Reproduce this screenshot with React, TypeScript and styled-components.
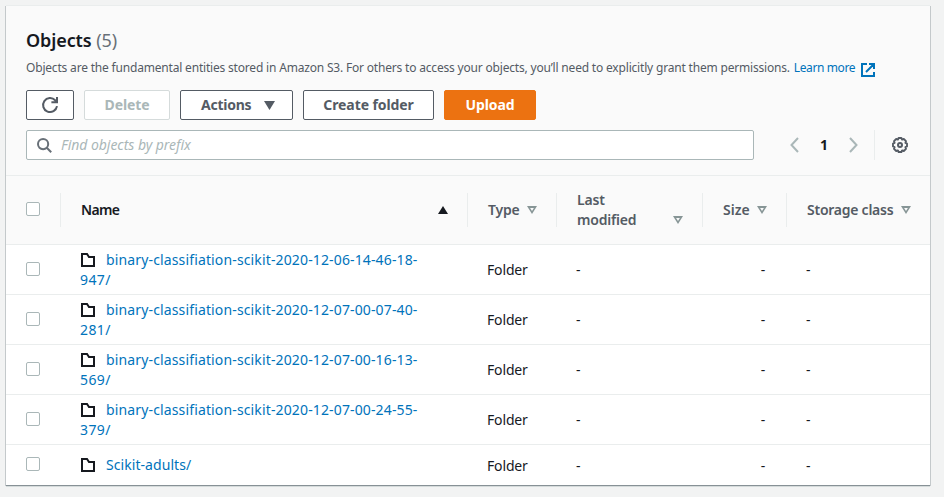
import React from "react";
import styled, { createGlobalStyle } from "styled-components";

const GlobalStyle = createGlobalStyle`
  * { box-sizing: border-box; }
  body {
    margin: 0;
    background: #f2f3f3;
    color: #16191f;
    font-family: "Noto Sans", "Open Sans", sans-serif;
    font-size: 14px;
    line-height: 20px;
  }
`;

const Page = styled.main`
  width: 944px;
  height: 497px;
  padding: 6px 14px 11px 6px;
  overflow: hidden;
`;

const Panel = styled.section`
  width: 924px;
  height: 480px;
  background: #fff;
  box-shadow: 0 1px 0 0 #d5dbdb, 1px 0 0 0 #c4c9cb, -1px 0 0 0 #c4c9cb, 0 -1px 0 0 #eaeded;
  border-bottom: 1px solid #879196;
`;

const PanelHeader = styled.header`
  height: 170px;
  padding: 22px 20px 0;
  background: #fafafa;
  border-bottom: 1px solid #eaeded;
`;

const Text = styled.span<{ $spacing?: number }>`
  letter-spacing: ${({ $spacing = 0 }) => $spacing}px;
  white-space: nowrap;
`;

const Title = styled.h2`
  margin: 0;
  height: 24px;
  font-size: 18px;
  line-height: 24px;
  font-weight: 600;
  letter-spacing: -0.1px;
  white-space: nowrap;
`;

const Count = styled.span`
  color: #687078;
  font-weight: 400;
`;

const Description = styled.p`
  display: flex;
  align-items: center;
  height: 18px;
  margin: 7px 0 13px;
  font-size: 12px;
  line-height: 18px;
  color: #545b64;
`;

const Link = styled.a`
  color: #0073bb;
  text-decoration: none;
`;

const LearnMore = styled(Link)`
  display: flex;
  align-items: center;
  gap: 6px;
  margin-left: 4px;
  svg { margin-top: 3px; }
`;

const Buttons = styled.div`
  display: flex;
  gap: 10px;
`;

const Button = styled.button<{ $width: number; $kind?: "disabled" | "primary" }>`
  display: flex;
  align-items: center;
  justify-content: center;
  gap: 12px;
  width: ${({ $width }) => $width}px;
  height: 30px;
  padding: 0;
  border: 1px solid ${({ $kind }) =>
    $kind === "primary" ? "#ec7211" : $kind === "disabled" ? "#d5dbdb" : "#545b64"};
  border-radius: 2px;
  background: ${({ $kind }) => ($kind === "primary" ? "#ec7211" : "#fff")};
  color: ${({ $kind }) =>
    $kind === "primary" ? "#fff" : $kind === "disabled" ? "#aab7b8" : "#545b64"};
  font: 700 14px/20px "Noto Sans", "Open Sans", sans-serif;
  letter-spacing: -0.1px;
`;

const MenuButton = styled(Button)`
  justify-content: space-between;
  padding: 0 17px 0 20px;
  letter-spacing: -0.25px;
`;

const Tools = styled.div`
  display: flex;
  align-items: center;
  height: 30px;
  margin-top: 10px;
`;

const Search = styled.div`
  display: flex;
  align-items: center;
  gap: 9px;
  width: 728px;
  height: 30px;
  padding-left: 10px;
  border: 1px solid #aab7b8;
  border-radius: 2px;
  background: #fff;
  color: #aab7b8;
  font-style: italic;
`;

const Pager = styled.nav`
  display: flex;
  align-items: center;
  justify-content: space-between;
  width: 68px;
  margin: 0 1px 0 36px;
  font-weight: 700;
`;

const Preferences = styled.div`
  display: flex;
  align-items: center;
  height: 30px;
  margin-left: 15px;
  padding-left: 17px;
  border-left: 1px solid #eaeded;
`;

const Row = styled.div<{ $height: number }>`
  display: grid;
  grid-template-columns: 55px 407px 89px 146px 84px 143px;
  align-items: center;
  height: ${({ $height }) => $height}px;
  border-bottom: 1px solid #eaeded;
  &:last-child { border-bottom: 0; }
`;

const HeadRow = styled(Row)`
  background: #fafafa;
  color: #545b64;
  font-weight: 600;
`;

const HeadCell = styled.div<{ $active?: boolean }>`
  display: flex;
  align-items: center;
  justify-content: space-between;
  height: 34px;
  padding: 0 19px 0 20px;
  border-right: 1px solid #eaeded;
  color: ${({ $active }) => ($active ? "#16191f" : "inherit")};
  &:last-child { border-right: 0; }
`;

const TwoLines = styled.span`
  letter-spacing: -0.2px;
  line-height: 20px;
`;

const LowArrow = styled.span`
  display: flex;
  margin-top: 20px;
`;

const CheckCell = styled.div<{ $divider?: boolean }>`
  display: flex;
  align-items: center;
  height: 34px;
  padding: 0 0 2px 20px;
  border-right: 1px solid ${({ $divider }) => ($divider ? "#eaeded" : "transparent")};
`;

const Checkbox = styled.span`
  width: 14px;
  height: 14px;
  border: 1px solid #aab7b8;
  border-radius: 2px;
  background: #fff;
`;

const NameCell = styled.div`
  padding-left: 19px;
  svg { margin: 0 11px 0 1px; vertical-align: -2px; }
`;

const Cell = styled.div<{ $right?: boolean }>`
  padding: 1px ${({ $right }) => ($right ? 22 : 20)}px 0 19px;
  letter-spacing: -0.15px;
  text-align: ${({ $right }) => ($right ? "right" : "left")};
`;

const ICON = { fill: "none", stroke: "currentColor", strokeWidth: 2 } as const;

const Refresh = () => (
  <svg width="18" height="18" viewBox="0 0 18 18" {...ICON}>
    <path d="M16 10.2A7 7 0 1 1 14.2 4.3L16 6M16 1V6.2H10.4" />
  </svg>
);

const Magnifier = () => (
  <svg width="15" height="15" viewBox="0 0 15 15" {...ICON} stroke="#687078">
    <circle cx="6.1" cy="6.1" r="5.1" />
    <path d="M9.8 9.8l4.4 4.4" />
  </svg>
);

const External = () => (
  <svg width="14" height="14" viewBox="0 0 14 14" {...ICON}>
    <path d="M6 1H1V13H13V9M8 1H13V6M13 1L5 9" />
  </svg>
);

const Chevron = ({ d }: { d: string }) => (
  <svg width="9" height="16" viewBox="0 0 9 16" {...ICON} stroke="#aab7b8">
    <path d={d} />
  </svg>
);

const Gear = () => (
  <svg width="16" height="16" viewBox="0 0 16 16" {...ICON} stroke="#545b64">
    <path
      d="M6.6 1h2.8l.7 1.6 1.7-.6 2.2 2.2-.6 1.7 1.6.7v2.8l-1.6.7.6 1.7-2.2 2.2-1.7-.6-.7 1.6H6.6l-.7-1.6-1.7.6L2 11.8l.6-1.7L1 9.4V6.6l1.6-.7L2 4.2 4.2 2l1.7.6z"
      strokeWidth="1.9"
      strokeLinejoin="round"
    />
    <circle cx="8" cy="8" r="2" />
  </svg>
);

const SortUp = () => (
  <svg width="10" height="8" viewBox="0 0 10 8"><path d="M5 0L10 8H0z" fill="#16191f" /></svg>
);

const SortDown = () => (
  <svg width="10" height="8" viewBox="0 0 10 8">
    <path d="M0 0H10L5 8zM3.1 2H6.9L5 5z" fill="#879596" fillRule="evenodd" />
  </svg>
);

const Caret = () => (
  <svg width="11" height="9" viewBox="0 0 11 9"><path d="M0 0H11L5.5 9z" fill="currentColor" /></svg>
);

const Folder = () => (
  <svg width="14" height="14" viewBox="0 0 14 14" {...ICON}>
    <path d="M1 1H6L8 4H13V13H1z" />
  </svg>
);

const OBJECTS = [
  ["binary-classifiation-scikit-2020-12-06-14-46-18-", "947/"],
  ["binary-classifiation-scikit-2020-12-07-00-07-40-", "281/"],
  ["binary-classifiation-scikit-2020-12-07-00-16-13-", "569/"],
  ["binary-classifiation-scikit-2020-12-07-00-24-55-", "379/"],
  ["Scikit-adults/"],
];

export default function App() {
  return (
    <Page>
      <GlobalStyle />
      <Panel>
        <PanelHeader>
          <Title>Objects <Count>(5)</Count></Title>
          <Description>
            <Text $spacing={-0.187}>
              Objects are the fundamental entities stored in Amazon S3. For others to access your
              objects, you’ll need to explicitly grant them permissions.
            </Text>
            <LearnMore><Text $spacing={-0.4}>Learn more</Text><External /></LearnMore>
          </Description>
          <Buttons>
            <Button $width={48} aria-label="Refresh"><Refresh /></Button>
            <Button $width={86} $kind="disabled">Delete</Button>
            <MenuButton $width={113}>Actions <Caret /></MenuButton>
            <Button $width={131}>Create folder</Button>
            <Button $width={92} $kind="primary">Upload</Button>
          </Buttons>
          <Tools>
            <Search><Magnifier /><Text $spacing={-0.04}>Find objects by prefix</Text></Search>
            <Pager>
              <Chevron d="M8 1L1.5 8L8 15" />
              <span>1</span>
              <Chevron d="M1 1L7.5 8L1 15" />
            </Pager>
            <Preferences><Gear /></Preferences>
          </Tools>
        </PanelHeader>
        <HeadRow $height={69}>
          <CheckCell $divider><Checkbox /></CheckCell>
          <HeadCell $active><Text $spacing={-0.7}>Name</Text><SortUp /></HeadCell>
          <HeadCell><Text $spacing={-0.2}>Type</Text><SortDown /></HeadCell>
          <HeadCell>
            <TwoLines>Last<br />modified</TwoLines>
            <LowArrow><SortDown /></LowArrow>
          </HeadCell>
          <HeadCell><Text $spacing={0}>Size</Text><SortDown /></HeadCell>
          <HeadCell><Text $spacing={-0.25}>Storage class</Text><SortDown /></HeadCell>
        </HeadRow>
        {OBJECTS.map(([first, second]) => (
          <Row key={first} $height={second ? 50 : 40}>
            <CheckCell><Checkbox /></CheckCell>
            <NameCell>
              <Folder />
              <Link>
                <Text $spacing={second ? 0.14 : 0.06}>{first}</Text>
                {second && <><br /><Text $spacing={0.4}>{second}</Text></>}
              </Link>
            </NameCell>
            <Cell>Folder</Cell>
            <Cell>-</Cell>
            <Cell $right>-</Cell>
            <Cell>-</Cell>
          </Row>
        ))}
      </Panel>
    </Page>
  );
}
